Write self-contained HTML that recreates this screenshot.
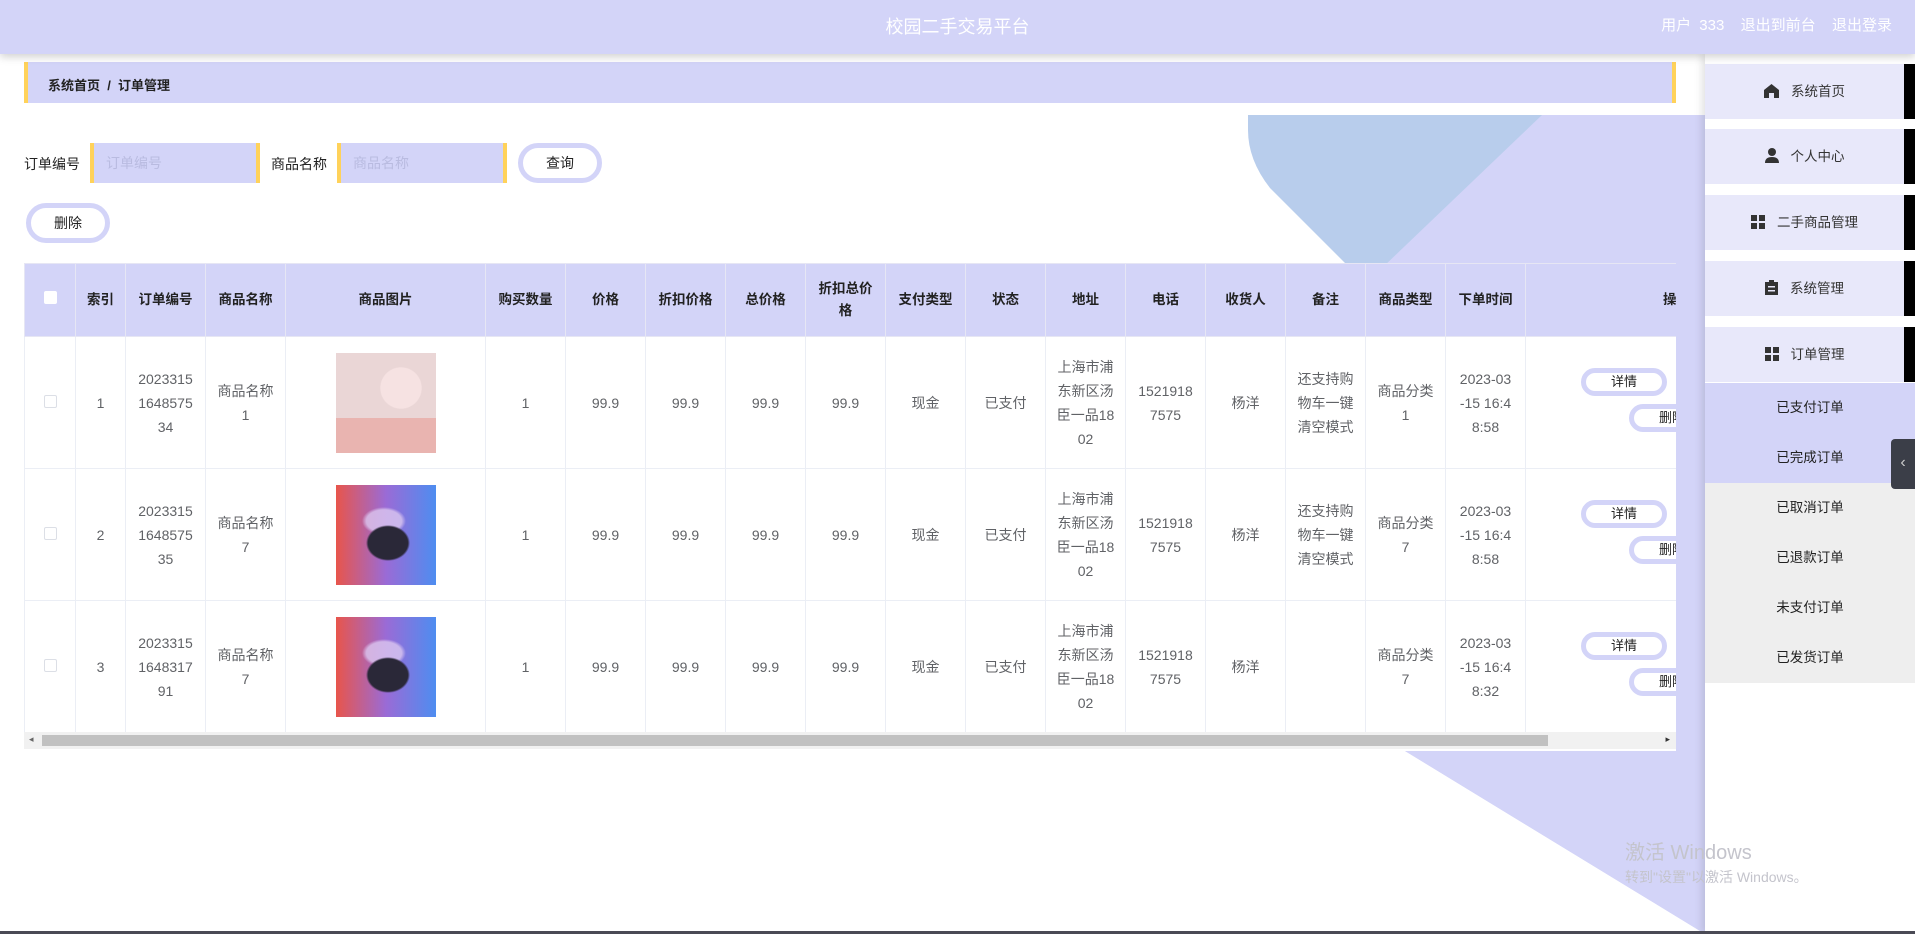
<!DOCTYPE html>
<html><head><meta charset="utf-8">
<style>
*{box-sizing:border-box;margin:0;padding:0}
body{width:1915px;height:934px;overflow:hidden;position:relative;background:#fff;font-family:"Liberation Sans","Noto Sans CJK SC",sans-serif;color:#333}
.hdr{position:absolute;left:0;top:0;width:1915px;height:54px;background:#d3d4f8;box-shadow:0 3px 8px rgba(0,0,0,.18);z-index:5}
.hdr .t{position:absolute;left:0;right:0;top:13px;text-align:center;color:#fff;font-size:18px}
.hdr .r{position:absolute;right:23px;top:14px;color:#fff;font-size:15px;word-spacing:4px}
.bg{position:absolute;left:0;top:0;z-index:0}
.bc{position:absolute;left:24px;top:62px;width:1652px;height:41px;background:#d3d4f8;border-left:4px solid #ffd25a;border-right:4px solid #ffd25a;font-size:13px;font-weight:bold;color:#222;padding:13px 0 0 20px;z-index:2}
.lbl{position:absolute;font-size:14px;color:#222;top:154px;z-index:2}
.inp{position:absolute;top:143px;height:40px;background:#d3d4f8;border-left:4px solid #ffd25a;border-right:4px solid #ffd25a;color:#b9bbe0;font-size:14px;padding:10px 12px;z-index:2}
.btn{position:absolute;background:#fff;border:5px solid #d3d4f8;border-radius:22px;font-size:14px;color:#222;text-align:center;z-index:2}
.tw{position:absolute;left:24px;top:263px;width:1652px;height:486px;overflow:hidden;z-index:2;background:#fff}
table{border-collapse:collapse;table-layout:fixed;width:1803px}
th{background:#d3d4f8;height:73px;font-size:13.5px;color:#222;font-weight:bold;border:1px solid #e6e6f4;line-height:22px}
td{height:132px;font-size:14px;color:#606266;text-align:center;border:1px solid #ebeef5;line-height:24px;position:relative}
.cb{display:inline-block;width:13px;height:13px;border:1px solid #dcdfe6;background:#fff;border-radius:2px}
.img{width:100px;height:100px;margin:0 auto}
.p1{background:radial-gradient(circle at 65% 35%,#f6e2e2 0 22%,transparent 23%),linear-gradient(#ead6d6 0 65%,#e9b4b0 65%)}
.p2{background:radial-gradient(ellipse 22px 18px at 52% 58%,#2a2838 0 90%,transparent 100%),radial-gradient(ellipse 22px 14px at 48% 36%,rgba(220,200,240,.8) 0 80%,transparent 100%),linear-gradient(90deg,#e8554b,#9a6bd6 50%,#4e8df0)}
.db{position:absolute;width:86px;height:28px;border:5px solid #d3d4f8;border-radius:16px;background:#fff;font-size:13px;color:#222;line-height:18px}
.sb{position:absolute;left:0;bottom:0;width:1652px;height:17px;background:#f1f1f1}
.sb i{position:absolute;left:18px;top:3px;width:1506px;height:11px;background:#c1c1c1}
.side{position:absolute;left:1705px;top:54px;width:210px;height:880px;background:#fff;box-shadow:-3px 0 8px rgba(0,0,0,.12);z-index:3}
.mi{position:absolute;left:0;width:199px;height:55px;background:#e8e8fa;font-size:13.5px;color:#333;text-align:center;line-height:55px}
.mi:after{content:"";position:absolute;left:199px;top:0;width:11px;height:55px;background:#000}
.ic{display:inline-block;vertical-align:middle;margin-right:12px;margin-top:-3px}
.sub{position:absolute;left:0;width:210px;height:50px;font-size:13.5px;color:#222;text-align:center;line-height:50px}
.tab{position:absolute;left:1891px;top:439px;width:24px;height:50px;background:#3b3e48;border-radius:4px 0 0 4px;z-index:6;color:#ccc;font-size:16px;line-height:48px;text-align:center}
.wm{position:absolute;left:1625px;top:836px;color:#c4c4cc;z-index:7}
</style></head><body>
<svg class="bg" width="1915" height="934">
<path d="M1290 115 L1705 115 L1705 934 L1405 751 L1676 751 L1676 268 L1382 268 Z" fill="#d3d4f8"/>
<path d="M1248 115 L1542 115 L1382 268 L1350 268 L1270 188 Q1248 160 1248 130 Z" fill="#b8cdec"/>
<path d="M1405 751 L1705 934 L1705 760 Z" fill="#d3d4f8"/>
</svg>
<div class="hdr"><div class="t">校园二手交易平台</div><div class="r">用户 333 &nbsp;退出到前台 &nbsp;退出登录</div></div>
<div class="bc">系统首页 &nbsp;/ &nbsp;订单管理</div>
<div class="lbl" style="left:24px">订单编号</div>
<div class="inp" style="left:90px;width:170px">订单编号</div>
<div class="lbl" style="left:271px">商品名称</div>
<div class="inp" style="left:337px;width:170px">商品名称</div>
<div class="btn" style="left:518px;top:143px;width:84px;height:40px;line-height:30px">查询</div>
<div class="btn" style="left:26px;top:203px;width:84px;height:40px;line-height:30px">删除</div>
<div class="tw"><table>
<colgroup><col style="width:51px"><col style="width:50px"><col style="width:80px"><col style="width:80px"><col style="width:200px"><col style="width:80px"><col style="width:80px"><col style="width:80px"><col style="width:80px"><col style="width:80px"><col style="width:80px"><col style="width:80px"><col style="width:80px"><col style="width:80px"><col style="width:80px"><col style="width:80px"><col style="width:80px"><col style="width:80px"><col style="width:302px"></colgroup>
<tr><th><span class="cb" style="border-color:#fff"></span></th><th>索引</th><th>订单编号</th><th>商品名称</th><th>商品图片</th><th>购买数量</th><th>价格</th><th>折扣价格</th><th>总价格</th><th>折扣总价<br>格</th><th>支付类型</th><th>状态</th><th>地址</th><th>电话</th><th>收货人</th><th>备注</th><th>商品类型</th><th>下单时间</th><th>操作</th></tr>
<tr><td><span class="cb"></span></td><td>1</td><td>2023315<br>1648575<br>34</td><td>商品名称<br>1</td><td><div class="img p1"></div></td><td>1</td><td>99.9</td><td>99.9</td><td>99.9</td><td>99.9</td><td>现金</td><td>已支付</td><td>上海市浦<br>东新区汤<br>臣一品18<br>02</td><td>1521918<br>7575</td><td>杨洋</td><td>还支持购<br>物车一键<br>清空模式</td><td>商品分类<br>1</td><td>2023-03<br>-15 16:4<br>8:58</td><td><div class="db" style="left:55px;top:31px">详情</div><div class="db" style="left:103px;top:67px">删除</div></td></tr>
<tr><td><span class="cb"></span></td><td>2</td><td>2023315<br>1648575<br>35</td><td>商品名称<br>7</td><td><div class="img p2"></div></td><td>1</td><td>99.9</td><td>99.9</td><td>99.9</td><td>99.9</td><td>现金</td><td>已支付</td><td>上海市浦<br>东新区汤<br>臣一品18<br>02</td><td>1521918<br>7575</td><td>杨洋</td><td>还支持购<br>物车一键<br>清空模式</td><td>商品分类<br>7</td><td>2023-03<br>-15 16:4<br>8:58</td><td><div class="db" style="left:55px;top:31px">详情</div><div class="db" style="left:103px;top:67px">删除</div></td></tr>
<tr><td><span class="cb"></span></td><td>3</td><td>2023315<br>1648317<br>91</td><td>商品名称<br>7</td><td><div class="img p2"></div></td><td>1</td><td>99.9</td><td>99.9</td><td>99.9</td><td>99.9</td><td>现金</td><td>已支付</td><td>上海市浦<br>东新区汤<br>臣一品18<br>02</td><td>1521918<br>7575</td><td>杨洋</td><td></td><td>商品分类<br>7</td><td>2023-03<br>-15 16:4<br>8:32</td><td><div class="db" style="left:55px;top:31px">详情</div><div class="db" style="left:103px;top:67px">删除</div></td></tr>
</table>
<div class="sb"><span style="position:absolute;left:5px;top:2px;font-size:9px;color:#666">◂</span><i></i><span style="position:absolute;right:6px;top:2px;font-size:9px;color:#333">▸</span></div>
</div>
<div class="side">
<div class="mi" style="top:10px"><svg class="ic" width="15" height="14" viewBox="0 0 15 14"><path d="M7.5 0 L15 6 V14 H10 V9 H5 V14 H0 V6 Z" fill="#333"/></svg>系统首页</div>
<div class="mi" style="top:75px"><svg class="ic" width="14" height="15" viewBox="0 0 14 15"><circle cx="7" cy="4" r="4" fill="#333"/><path d="M0 15 Q0 9 7 9 Q14 9 14 15Z" fill="#333"/></svg>个人中心</div>
<div class="mi" style="top:141px"><svg class="ic" width="14" height="14" viewBox="0 0 14 14"><rect width="6" height="6" fill="#333"/><rect x="8" width="6" height="6" fill="#333"/><rect y="8" width="6" height="6" fill="#333"/><rect x="8" y="8" width="6" height="6" fill="#333"/></svg>二手商品管理</div>
<div class="mi" style="top:207px"><svg class="ic" width="13" height="15" viewBox="0 0 13 15"><path d="M0 2H4V0H9V2H13V15H0Z M3 6H10V7.5H3Z M3 10H10V11.5H3Z" fill="#333" fill-rule="evenodd"/></svg>系统管理</div>
<div class="mi" style="top:273px"><svg class="ic" width="14" height="14" viewBox="0 0 14 14"><rect width="6" height="6" fill="#333"/><rect x="8" width="6" height="6" fill="#333"/><rect y="8" width="6" height="6" fill="#333"/><rect x="8" y="8" width="6" height="6" fill="#333"/></svg>订单管理</div>
<div style="position:absolute;left:0;top:329px;width:210px;height:100px;background:#d3d4f8"></div>
<div style="position:absolute;left:0;top:429px;width:210px;height:200px;background:#eeeeee"></div>
<div class="sub" style="top:329px">已支付订单</div>
<div class="sub" style="top:379px">已完成订单</div>
<div class="sub" style="top:429px">已取消订单</div>
<div class="sub" style="top:479px">已退款订单</div>
<div class="sub" style="top:529px">未支付订单</div>
<div class="sub" style="top:579px">已发货订单</div>
</div>
<div class="tab">‹</div>
<div class="wm"><div style="font-size:20px">激活 Windows</div><div style="font-size:14px;margin-top:2px">转到"设置"以激活 Windows。</div></div>
<div style="position:absolute;left:0;top:931px;width:1915px;height:3px;background:#4a4a55;z-index:8"></div>
</body></html>
